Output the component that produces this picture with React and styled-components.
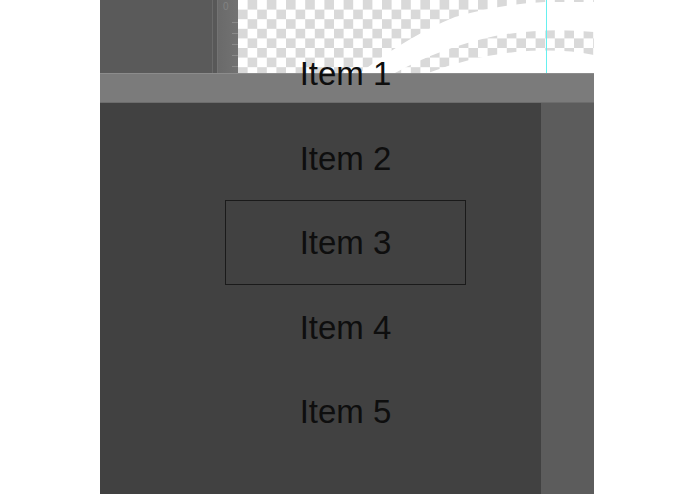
import React from "react";
import styled, { createGlobalStyle } from "styled-components";

const GlobalStyle = createGlobalStyle`
  html, body {
    margin: 0;
    padding: 0;
    background: #ffffff;
    font-family: "Liberation Sans", Arial, sans-serif;
  }
`;

const Page = styled.div`
  width: 695px;
  height: 494px;
  background: #ffffff;
  overflow: hidden;
`;

const Frame = styled.div`
  position: relative;
  margin-left: 100px;
  width: 494px;
  height: 494px;
  display: flex;
  flex-direction: column;
`;

const TopStrip = styled.div`
  display: flex;
  height: 73px;
`;

const LeftPanel = styled.div`
  width: 112px;
  background: #5a5a5a;
`;

const Divider = styled.div`
  width: 4px;
  background: #585858;
  border-left: 1px solid #6a6a6a;
  border-right: 1px solid #737373;
`;

const Ruler = styled.div`
  position: relative;
  width: 20px;
  background: linear-gradient(to right, #6a6a6a, #727272);
`;

const RulerZero = styled.span`
  position: absolute;
  left: 5px;
  top: 1px;
  font-size: 10px;
  color: #828282;
`;

const Tick = styled.div`
  height: 1px;
  width: 6px;
  margin-left: 14px;
  background: #8a8a8a;
`;

const TickColumn = styled.div`
  padding-top: 22px;
  display: flex;
  flex-direction: column;
  gap: 10px;
`;

const Canvas = styled.svg`
  flex: 1;
  display: block;
  height: 73px;
`;

const Bar = styled.div`
  height: 28px;
  background: #7b7b7b;
  border-top: 1px solid #8c8c8c;
  border-bottom: 1px solid #6c6c6c;
`;

const Body = styled.div`
  flex: 1;
  display: flex;
`;

const Main = styled.div`
  flex: 1;
  background: #414141;
`;

const Side = styled.div`
  width: 53px;
  background: #5c5c5c;
`;

const List = styled.div`
  position: absolute;
  left: 125px;
  top: 31px;
  width: 241px;
  display: flex;
  flex-direction: column;
`;

const Item = styled.div`
  height: 84.5px;
  box-sizing: border-box;
  display: flex;
  align-items: center;
  justify-content: center;
  padding-top: 2px;
  font-size: 33px;
  color: #0e0e0e;
  border: 1px solid ${(p) => (p.selected ? "#1a1a1a" : "transparent")};
`;

const items = ["Item 1", "Item 2", "Item 3", "Item 4", "Item 5"];

function Checker() {
  return (
    <Canvas viewBox="238 0 356 73" preserveAspectRatio="none">
      <defs>
        <pattern id="chk" x="238" y="0" width="19.2" height="19.2" patternUnits="userSpaceOnUse">
          <rect x="0" y="0" width="19.2" height="19.2" fill="#ffffff" />
          <rect x="9.6" y="0" width="9.6" height="9.6" fill="#d9d9d9" />
          <rect x="0" y="9.6" width="9.6" height="9.6" fill="#d9d9d9" />
        </pattern>
      </defs>
      <rect x="238" y="0" width="356" height="73" fill="url(#chk)" />
      <path
        d="M360 73 Q410 35 455 17 Q500 4 545 2 L594 2 L594 32 Q545 27 495 36 Q440 48 395 73 Z"
        fill="#ffffff"
      />
      <path
        d="M428 73 Q470 57 515 52 Q560 48 594 55 L594 73 Z"
        fill="#ffffff"
      />
      <rect x="546" y="0" width="1" height="73" fill="#66f0f0" />
    </Canvas>
  );
}

export default function App() {
  return (
    <Page>
      <GlobalStyle />
      <Frame>
        <TopStrip>
          <LeftPanel />
          <Divider />
          <Ruler>
            <RulerZero>0</RulerZero>
            <TickColumn>
              <Tick />
              <Tick />
              <Tick />
              <Tick />
              <Tick />
            </TickColumn>
          </Ruler>
          <Checker />
        </TopStrip>
        <Bar />
        <Body>
          <Main />
          <Side />
        </Body>
        <List>
          {items.map((label, i) => (
            <Item key={label} selected={i === 2}>
              {label}
            </Item>
          ))}
        </List>
      </Frame>
    </Page>
  );
}
